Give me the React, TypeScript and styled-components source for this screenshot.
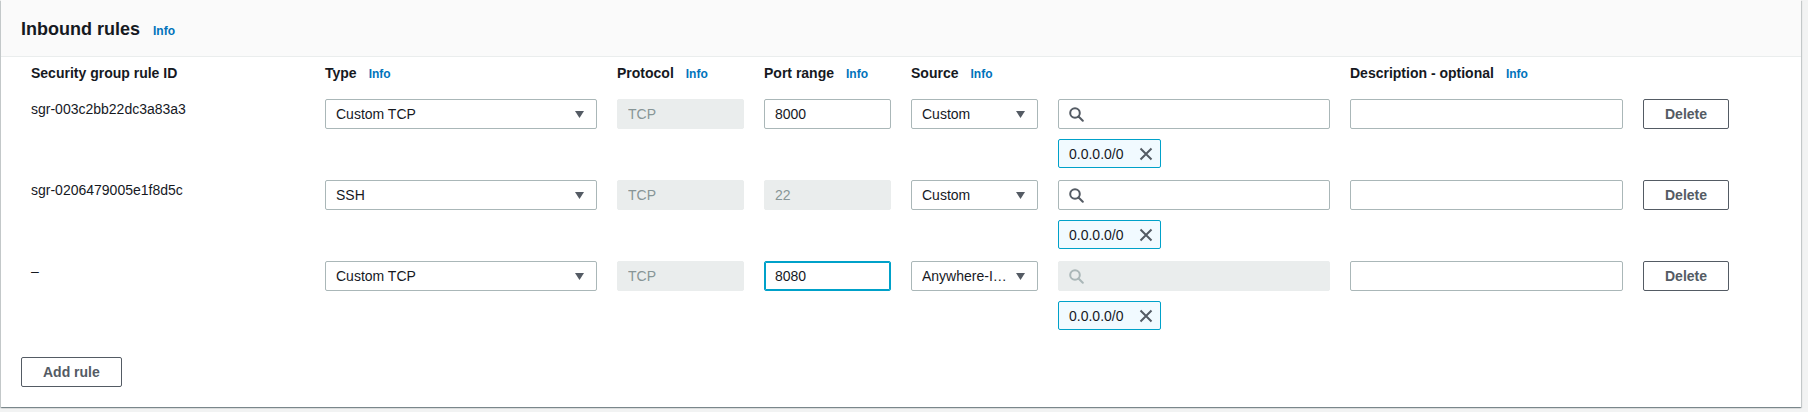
import React from "react";
import styled, { createGlobalStyle, css } from "styled-components";

const GlobalStyle = createGlobalStyle`
  html, body {
    margin: 0;
    padding: 0;
    background: #f2f3f3;
  }
  body {
    font-family: "Liberation Sans", Arial, sans-serif;
    font-size: 14px;
    color: #16191f;
  }
  * { box-sizing: border-box; }
`;

const COLS = "274px 272px 127px 127px 127px 272px 273px 86px";

const Page = styled.div`
  height: 412px;
  padding-left: 1px;
`;

const Card = styled.section`
  width: 1800px;
  background: #ffffff;
  box-shadow: 0 1px 1px 0 rgba(0, 28, 36, 0.3), 1px 1px 1px 0 rgba(0, 28, 36, 0.15),
    -1px 1px 1px 0 rgba(0, 28, 36, 0.15);
  padding-bottom: 20px;
`;

const Header = styled.header`
  height: 57px;
  background: #fafafa;
  border-bottom: 1px solid #eaeded;
  padding: 2px 20px 0;
  display: flex;
  align-items: center;
`;

const TitleLine = styled.div`
  display: flex;
  align-items: baseline;
  gap: 13px;
`;

const Title = styled.h2`
  margin: 0;
  font-size: 18px;
  line-height: 22px;
  font-weight: 700;
  color: #16191f;
`;

const InfoLink = styled.a`
  font-size: 12px;
  font-weight: 700;
  color: #0073bb;
  text-decoration: none;
  cursor: pointer;
`;

const Body = styled.div`
  padding: 6px 20px 0;
`;

const Table = styled.div`
  padding-left: 10px;
  display: flex;
  flex-direction: column;
  gap: 12px;
`;

const LabelRow = styled.div`
  display: grid;
  grid-template-columns: ${COLS};
  column-gap: 20px;
  height: 20px;
  margin-bottom: 4px;
`;

const Label = styled.div`
  display: flex;
  align-items: baseline;
  gap: 12px;
  font-weight: 700;
  font-size: 14px;
  line-height: 20px;
  white-space: nowrap;
`;

const RuleRow = styled.div`
  display: grid;
  grid-template-columns: ${COLS};
  grid-template-rows: 30px 29px;
  column-gap: 20px;
  row-gap: 10px;
`;

const IdCell = styled.div`
  grid-row: 1 / span 2;
  line-height: 20px;
  font-size: 14px;
  color: #16191f;
`;

const fieldBase = css`
  height: 30px;
  border: 1px solid #aab7b8;
  border-radius: 2px;
  background: #ffffff;
  font-family: inherit;
  font-size: 14px;
  color: #16191f;
`;

const SelectBox = styled.div`
  ${fieldBase};
  display: flex;
  align-items: center;
  gap: 6px;
  padding: 0 12px 0 10px;
  cursor: pointer;
`;

const SelectText = styled.span`
  flex: 1;
  min-width: 0;
  overflow: hidden;
  white-space: nowrap;
  text-overflow: ellipsis;
`;

const TextInput = styled.input<{ $disabled?: boolean; $focused?: boolean }>`
  ${fieldBase};
  width: 100%;
  padding: 0 10px;
  outline: none;
  ${(p) =>
    p.$disabled &&
    css`
      background: #eaeded;
      border-color: #eaeded;
      color: #879596;
    `}
  ${(p) =>
    p.$focused &&
    css`
      border-color: #00a1c9;
      box-shadow: inset 0 0 0 1px #00a1c9;
    `}
`;

const SearchBox = styled.div<{ $disabled?: boolean }>`
  ${fieldBase};
  display: flex;
  align-items: center;
  gap: 8px;
  padding: 0 10px;
  color: #545b64;
  ${(p) =>
    p.$disabled &&
    css`
      background: #eaeded;
      border-color: #eaeded;
      color: #aab7b8;
    `}
`;

const BareInput = styled.input`
  flex: 1;
  min-width: 0;
  border: none;
  outline: none;
  background: transparent;
  font-family: inherit;
  font-size: 14px;
  color: #16191f;
  padding: 0;
`;

const Token = styled.div`
  grid-column: 6;
  grid-row: 2;
  justify-self: start;
  height: 29px;
  display: flex;
  align-items: center;
  gap: 15px;
  padding: 0 7px 0 10px;
  background: #f1faff;
  border: 1px solid #00a1c9;
  border-radius: 2px;
  font-size: 14px;
  color: #16191f;
`;

const DismissButton = styled.button`
  display: flex;
  padding: 0;
  border: none;
  background: none;
  color: #545b64;
  cursor: pointer;
`;

const Button = styled.button<{ $top?: number }>`
  height: 30px;
  padding: 0 21px;
  border: 1px solid #545b64;
  border-radius: 2px;
  background: #ffffff;
  color: #545b64;
  font-family: inherit;
  font-size: 14px;
  font-weight: 700;
  cursor: pointer;
  margin-top: ${(p) => p.$top ?? 0}px;
`;

const DeleteCell = styled.div`
  display: flex;
`;

const Caret = () => (
  <svg width="9" height="7" viewBox="0 0 9 7" aria-hidden="true">
    <polygon points="0,0 9,0 4.5,7" fill="#545b64" />
  </svg>
);

const SearchIcon = () => (
  <svg width="15" height="15" viewBox="0 0 15 15" aria-hidden="true">
    <circle cx="6" cy="6" r="4.8" fill="none" stroke="currentColor" strokeWidth="2" />
    <line x1="9.5" y1="9.5" x2="13.8" y2="13.8" stroke="currentColor" strokeWidth="2" strokeLinecap="round" />
  </svg>
);

const CloseIcon = () => (
  <svg width="14" height="14" viewBox="0 0 14 14" aria-hidden="true">
    <path d="M1.5 1.5 L12.5 12.5 M12.5 1.5 L1.5 12.5" stroke="currentColor" strokeWidth="2" fill="none" />
  </svg>
);

type Rule = {
  id: string;
  type: string;
  protocol: string;
  port: string;
  portEditable: boolean;
  portFocused?: boolean;
  source: string;
  searchDisabled?: boolean;
  cidr: string;
};

const rules: Rule[] = [
  { id: "sgr-003c2bb22dc3a83a3", type: "Custom TCP", protocol: "TCP", port: "8000", portEditable: true, source: "Custom", cidr: "0.0.0.0/0" },
  { id: "sgr-0206479005e1f8d5c", type: "SSH", protocol: "TCP", port: "22", portEditable: false, source: "Custom", cidr: "0.0.0.0/0" },
  { id: "–", type: "Custom TCP", protocol: "TCP", port: "8080", portEditable: true, portFocused: true, source: "Anywhere-IPv4", searchDisabled: true, cidr: "0.0.0.0/0" },
];

const headers: { label: string; info: boolean }[] = [
  { label: "Security group rule ID", info: false },
  { label: "Type", info: true },
  { label: "Protocol", info: true },
  { label: "Port range", info: true },
  { label: "Source", info: true },
  { label: "", info: false },
  { label: "Description - optional", info: true },
  { label: "", info: false },
];

export default function App() {
  return (
    <>
      <GlobalStyle />
      <Page>
        <Card>
          <Header>
            <TitleLine>
              <Title>Inbound rules</Title>
              <InfoLink>Info</InfoLink>
            </TitleLine>
          </Header>
          <Body>
            <Table>
              <LabelRow>
                {headers.map((h, i) => (
                  <Label key={i}>
                    {h.label && <span>{h.label}</span>}
                    {h.info && <InfoLink>Info</InfoLink>}
                  </Label>
                ))}
              </LabelRow>
              {rules.map((r, i) => (
                <RuleRow key={i}>
                  <IdCell>{r.id}</IdCell>
                  <SelectBox>
                    <SelectText>{r.type}</SelectText>
                    <Caret />
                  </SelectBox>
                  <TextInput value={r.protocol} readOnly $disabled />
                  <TextInput
                    value={r.port}
                    readOnly
                    $disabled={!r.portEditable}
                    $focused={r.portFocused}
                  />
                  <SelectBox>
                    <SelectText>{r.source}</SelectText>
                    <Caret />
                  </SelectBox>
                  <SearchBox $disabled={r.searchDisabled}>
                    <SearchIcon />
                    <BareInput readOnly value="" />
                  </SearchBox>
                  <TextInput value="" readOnly />
                  <DeleteCell>
                    <Button>Delete</Button>
                  </DeleteCell>
                  <Token>
                    <span>{r.cidr}</span>
                    <DismissButton aria-label="Remove">
                      <CloseIcon />
                    </DismissButton>
                  </Token>
                </RuleRow>
              ))}
            </Table>
            <Button $top={27}>Add rule</Button>
          </Body>
        </Card>
      </Page>
    </>
  );
}
